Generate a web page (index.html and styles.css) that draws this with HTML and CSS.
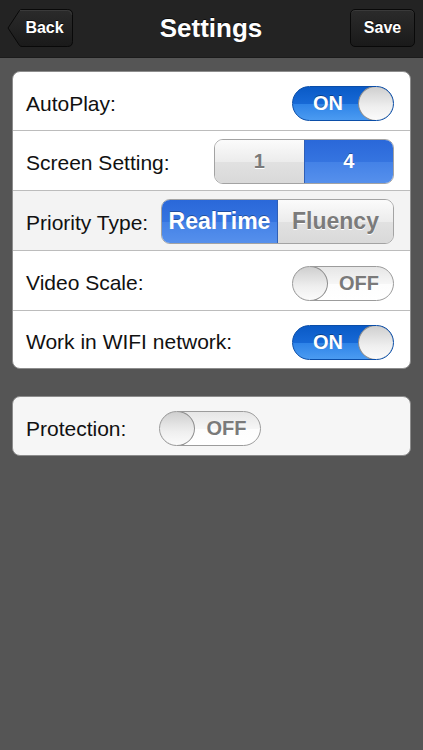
FILE: index.html
```html
<!DOCTYPE html>
<html lang="en">

<head>
    <meta charset="UTF-8">
    <meta name="viewport" content="width=device-width, initial-scale=1.0">
    <title>Settings</title>
    <link rel="stylesheet" href="styles.css">
</head>

<body>
    <header class="navbar">
        <button class="nav-btn back">
            <svg class="back-shape" viewBox="0 0 66 38" width="66" height="38">
                <defs>
                    <linearGradient id="backFill" x1="0" y1="0" x2="0" y2="1">
                        <stop offset="0" stop-color="#2b2b2b" />
                        <stop offset="1" stop-color="#1a1a1a" />
                    </linearGradient>
                </defs>
                <path d="M1 19 L12.5 1.5 Q13.3 0.5 15 0.5 H60.5 Q65.5 0.5 65.5 5.5 V32.5 Q65.5 37.5 60.5 37.5 H15 Q13.3 37.5 12.5 36.5 Z"
                    fill="url(#backFill)" stroke="#090909" stroke-width="1" />
                <path d="M13 1.5 H60.5 Q64.5 1.5 64.5 5.5" fill="none" stroke="#3a3a3a" stroke-width="1" />
            </svg>
            <span>Back</span>
        </button>
        <h1>Settings</h1>
        <button class="nav-btn save">Save</button>
    </header>

    <main class="content">
        <div class="group">
            <div class="row">
                <span class="label">AutoPlay:</span>
                <div class="switch on"><span class="switch-text">ON</span><span class="knob"></span></div>
            </div>
            <div class="row">
                <span class="label">Screen Setting:</span>
                <div class="seg screen-seg">
                    <span class="seg-item">1</span>
                    <span class="seg-item active">4</span>
                </div>
            </div>
            <div class="row shaded">
                <span class="label">Priority Type:</span>
                <div class="seg priority-seg">
                    <span class="seg-item active">RealTime</span>
                    <span class="seg-item">Fluency</span>
                </div>
            </div>
            <div class="row">
                <span class="label">Video Scale:</span>
                <div class="switch off"><span class="knob"></span><span class="switch-text">OFF</span></div>
            </div>
            <div class="row last">
                <span class="label">Work in WIFI network:</span>
                <div class="switch on"><span class="switch-text">ON</span><span class="knob"></span></div>
            </div>
        </div>

        <div class="group light">
            <div class="row start">
                <span class="label">Protection:</span>
                <div class="switch off"><span class="knob"></span><span class="switch-text">OFF</span></div>
            </div>
        </div>
    </main>
</body>

</html>
```

FILE: styles.css
```css
* {
    margin: 0;
    padding: 0;
    box-sizing: border-box;
    font-family: "Liberation Sans", Arial, sans-serif;
}

body {
    min-height: 100vh;
    background: #555555;
}

/* top bar */

.navbar {
    display: grid;
    grid-template-columns: 1fr auto 1fr;
    align-items: center;
    height: 58px;
    padding: 0 8px 1px 7px;
    background: #232323;
    border-bottom: 1px solid #1b1b1b;
}

.navbar h1 {
    font-size: 26px;
    font-weight: bold;
    color: #fff;
    text-shadow: 0 -1px 0 rgba(0, 0, 0, 0.6);
}

.nav-btn {
    height: 38px;
    border: none;
    outline: none;
    color: #fff;
    font-size: 16px;
    font-weight: bold;
    text-shadow: 0 -1px 0 rgba(0, 0, 0, 0.7);
    cursor: pointer;
}

.back {
    position: relative;
    justify-self: start;
    width: 66px;
    padding-left: 9px;
    background: none;
}

.back-shape {
    position: absolute;
    left: 0;
    top: 0;
}

.back span {
    position: relative;
}

.save {
    justify-self: end;
    width: 65px;
    border: 1px solid #090909;
    border-radius: 5px;
    background: linear-gradient(#2b2b2b, #1a1a1a);
    box-shadow: inset 0 1px 0 #3a3a3a;
}

/* groups */

.content {
    padding: 13px 12px 0;
}

.group {
    border: 1px solid #8c8c8c;
    border-radius: 8px;
    background: #fff;
    overflow: hidden;
    margin-bottom: 27px;
}

.group.light {
    background: #f6f6f6;
}

.row {
    display: flex;
    align-items: center;
    justify-content: space-between;
    height: 58px;
    padding: 5px 16px 0 13px;
}

.row + .row {
    height: 60px;
    border-top: 1px solid #bcbcbc;
}

.row + .row.last {
    height: 58px;
}

.row.shaded {
    background: #f3f3f3;
}

.row.start {
    justify-content: flex-start;
    gap: 33px;
}

.label {
    font-size: 21px;
    color: #111;
}

/* switches */

.switch {
    display: flex;
    align-items: center;
    width: 102px;
    height: 35px;
    border-radius: 18px;
    border: 1px solid #9c9c9c;
    overflow: hidden;
}

.switch.on {
    border-color: #0b4ea8;
    background: linear-gradient(#0a5ac6, #1769d6 50%, #2f84e8 53%, #4b9bf1);
}

.switch.off {
    background: linear-gradient(#e6e6e6, #f6f6f6 50%, #fdfdfd 53%, #ffffff);
}

.switch-text {
    flex: 1;
    text-align: center;
    font-size: 20px;
    font-weight: bold;
}

.on .switch-text {
    color: #fff;
    padding-left: 4px;
    text-shadow: 0 -1px 0 rgba(0, 0, 0, 0.35);
}

.off .switch-text {
    color: #7a7a7a;
    padding-right: 2px;
    text-shadow: 0 1px 0 #fff;
}

.knob {
    width: 36px;
    height: 35px;
    margin: -1px;
    border-radius: 50%;
    border: 1px solid #8d8d8d;
    background: linear-gradient(#cfcfcf, #efefef 60%, #fbfbfb);
}

/* segmented controls */

.seg {
    display: flex;
    height: 45px;
    margin-top: -4px;
    border: 1px solid #a3a3a3;
    border-radius: 9px;
    overflow: hidden;
}

.screen-seg {
    width: 180px;
}

.priority-seg {
    width: 233px;
}

.seg-item {
    flex: 1;
    display: flex;
    align-items: center;
    justify-content: center;
    font-weight: bold;
    color: #7b7b7b;
    text-shadow: 0 1px 0 #fff;
    background: linear-gradient(#fbfbfb, #ececec 50%, #e1e1e1 52%, #d9d9d9);
}

.screen-seg .seg-item {
    font-size: 20px;
}

.priority-seg .seg-item {
    font-size: 23px;
}

.seg-item.active {
    color: #fff;
    text-shadow: 0 -1px 0 rgba(0, 0, 0, 0.3);
    background: linear-gradient(#2a68d9, #3574e0 50%, #4482e7 52%, #5690ec);
}

.seg-item + .seg-item {
    border-left: 1px solid #2f5fb6;
}
```
